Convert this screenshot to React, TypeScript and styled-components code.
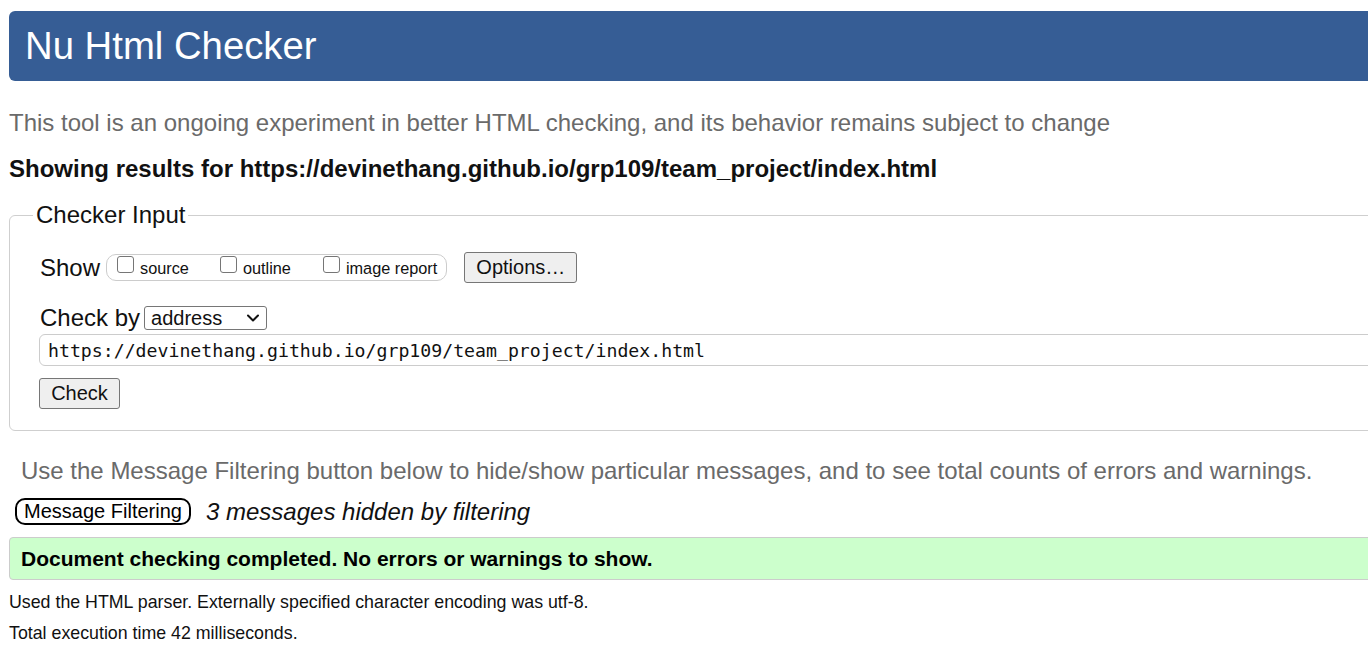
import React from "react";
import styled, { createGlobalStyle } from "styled-components";

const Global = createGlobalStyle`
  html, body { margin: 0; padding: 0; background: #fff; overflow: hidden; }
  body { font-family: "Liberation Sans", Arial, sans-serif; color: #111; }
`;

const Page = styled.div`
  width: 1420px;
  padding-left: 9px;
  box-sizing: border-box;
`;

const Header = styled.header`
  margin-top: 11px;
  height: 70px;
  background: #365d95;
  border-radius: 6px;
  display: flex;
  align-items: center;
  padding-left: 16px;
`;

const Title = styled.h1`
  margin: 0;
  font-weight: normal;
  font-size: 38.3px;
  line-height: 44px;
  color: #fff;
`;

const Intro = styled.p<{ $top: number; $indent?: number }>`
  margin: ${(p) => p.$top}px 0 0 ${(p) => p.$indent ?? 0}px;
  font-size: 24px;
  line-height: 28px;
  color: #6a6a6a;
  white-space: nowrap;
`;

const Showing = styled.h2`
  margin: 18px 0 0;
  font-size: 24px;
  line-height: 28px;
  font-weight: bold;
  color: #111;
  white-space: nowrap;
`;

const Fieldset = styled.fieldset`
  margin: 18px 0 0;
  padding: 0 0 21px 29px;
  border: 1px solid #cfcfcf;
  border-radius: 6px;
  min-width: 0;
`;

const Legend = styled.legend`
  margin-left: -6px;
  padding: 0 3px;
  font-size: 24px;
  line-height: 28px;
  color: #111;
`;

const Row = styled.div<{ $top: number; $height: number }>`
  display: flex;
  align-items: center;
  margin-top: ${(p) => p.$top}px;
  height: ${(p) => p.$height}px;
`;

const Label = styled.span`
  font-size: 24px;
  line-height: 28px;
  color: #111;
  padding-left: 1px;
`;

const Pill = styled.div`
  display: flex;
  align-items: center;
  margin-left: 6px;
  height: 25px;
  padding: 0 9px 0 10px;
  border: 1px solid #cccccc;
  border-radius: 10px;
`;

const CheckItem = styled.label<{ $gap: number }>`
  display: flex;
  align-items: center;
  margin-right: ${(p) => p.$gap}px;
  &:last-child { margin-right: 0; }
`;

const Box = styled.span`
  display: inline-block;
  width: 15px;
  height: 15px;
  border: 1px solid #767676;
  border-radius: 3px;
  background: #fff;
  margin-right: 6px;
  transform: translateY(-3px);
`;

const CheckText = styled.span`
  font-size: 16.3px;
  line-height: 20px;
  color: #111;
`;

const Button = styled.button<{ $width: number; $ml?: number }>`
  width: ${(p) => p.$width}px;
  height: 31px;
  margin-left: ${(p) => p.$ml ?? 0}px;
  padding: 0;
  font-family: "Liberation Sans", Arial, sans-serif;
  font-size: 20px;
  color: #111;
  background: #efefef;
  border: 1px solid #767676;
  border-radius: 3px;
`;

const Select = styled.div`
  display: flex;
  align-items: center;
  justify-content: space-between;
  box-sizing: border-box;
  width: 123px;
  height: 24px;
  margin-left: 4px;
  padding: 0 6px 0 6px;
  border: 1px solid #767676;
  border-radius: 3px;
  font-size: 20px;
  color: #111;
`;

const UrlInput = styled.div`
  margin: 2px 0 0 0;
  height: 30px;
  border: 1px solid #cccccc;
  border-radius: 6px;
  display: flex;
  align-items: center;
  padding-left: 8px;
  font-family: "DejaVu Sans Mono", "Liberation Mono", monospace;
  font-size: 18.2px;
  color: #111;
  white-space: nowrap;
`;

const CheckButtonWrap = styled.div`
  margin: 12px 0 0 0;
`;

const FilterRow = styled.div`
  display: flex;
  align-items: center;
  margin-top: 13px;
  height: 27px;
`;

const FilterButton = styled.button`
  margin-left: 6px;
  width: 176px;
  height: 27px;
  padding: 0;
  border: 2px solid #000;
  border-radius: 10px;
  background: #fff;
  font-family: "Liberation Sans", Arial, sans-serif;
  font-size: 20px;
  color: #000;
`;

const Hidden = styled.span`
  margin-left: 15px;
  font-size: 24px;
  font-style: italic;
  color: #111;
`;

const Success = styled.div`
  margin-top: 12px;
  height: 41px;
  display: flex;
  align-items: center;
  padding-left: 11px;
  background: #ccffcc;
  border: 1px solid #cccccc;
  border-radius: 4px;
  font-size: 21px;
  font-weight: bold;
  color: #000;
  white-space: nowrap;
`;

const Small = styled.p<{ $top: number }>`
  margin: ${(p) => p.$top}px 0 0;
  font-size: 17.8px;
  line-height: 22px;
  color: #111;
  white-space: nowrap;
`;

const Chevron = () => (
  <svg width="14" height="10" viewBox="0 0 14 10" fill="none">
    <path d="M2 2.5 L7 7.5 L12 2.5" stroke="#111" strokeWidth="2" strokeLinecap="round" strokeLinejoin="round" />
  </svg>
);

export default function App() {
  return (
    <>
      <Global />
      <Page>
        <Header>
          <Title>Nu Html Checker</Title>
        </Header>
        <Intro $top={28}>
          This tool is an ongoing experiment in better HTML checking, and its behavior remains subject to change
        </Intro>
        <Showing>Showing results for https://devinethang.github.io/grp109/team_project/index.html</Showing>
        <Fieldset>
          <Legend>Checker Input</Legend>
          <Row $top={23} $height={31}>
            <Label>Show</Label>
            <Pill>
              <CheckItem $gap={31}>
                <Box />
                <CheckText>source</CheckText>
              </CheckItem>
              <CheckItem $gap={32}>
                <Box />
                <CheckText>outline</CheckText>
              </CheckItem>
              <CheckItem $gap={0}>
                <Box />
                <CheckText>image report</CheckText>
              </CheckItem>
            </Pill>
            <Button $width={113} $ml={17}>Options…</Button>
          </Row>
          <Row $top={21} $height={28}>
            <Label>Check by</Label>
            <Select>
              <span>address</span>
              <Chevron />
            </Select>
          </Row>
          <UrlInput>https://devinethang.github.io/grp109/team_project/index.html</UrlInput>
          <CheckButtonWrap>
            <Button $width={81}>Check</Button>
          </CheckButtonWrap>
        </Fieldset>
        <Intro $top={26} $indent={12}>
          Use the Message Filtering button below to hide/show particular messages, and to see total counts of errors and warnings.
        </Intro>
        <FilterRow>
          <FilterButton>Message Filtering</FilterButton>
          <Hidden>3 messages hidden by filtering</Hidden>
        </FilterRow>
        <Success>Document checking completed. No errors or warnings to show.</Success>
        <Small $top={11}>Used the HTML parser. Externally specified character encoding was utf-8.</Small>
        <Small $top={9}>Total execution time 42 milliseconds.</Small>
      </Page>
    </>
  );
}
